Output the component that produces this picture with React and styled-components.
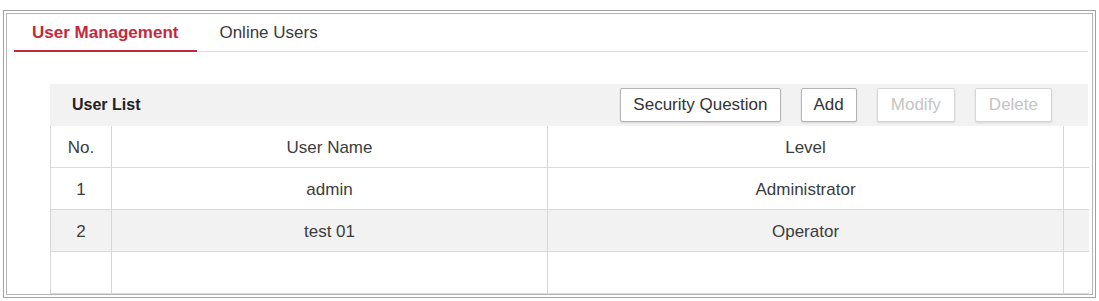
import React from "react";
import styled, { createGlobalStyle } from "styled-components";

const Global = createGlobalStyle`
  html, body { margin: 0; padding: 0; background: #fff; }
  body { font-family: "Liberation Sans", Arial, sans-serif; color: #333; }
`;

const Page = styled.div`
  padding: 10px 3px 0 3px;
  width: 1099px;
  height: 301px;
  box-sizing: border-box;
`;

const FrameOuter = styled.div`
  height: 288px;
  box-sizing: border-box;
  border: 1px solid #a2a2a2;
  padding: 2px;
  background: #fff;
`;

const Frame = styled.div`
  height: 100%;
  box-sizing: border-box;
  border: 1px solid #b4b4b4;
  background: #fff;
  overflow: hidden;
  display: flex;
  flex-direction: column;
`;

const TabBar = styled.div`
  display: flex;
  align-items: flex-end;
  margin: 0 4px 0 7px;
  height: 39px;
  border-bottom: 1px solid #dcdcdc;
`;

const Tab = styled.div`
  height: 100%;
  box-sizing: border-box;
  display: flex;
  align-items: center;
  padding: ${(p) => (p.$active ? "1px 19px 0 18px" : "1px 18px 0 22px")};
  font-size: 17px;
  font-weight: ${(p) => (p.$active ? 700 : 400)};
  color: ${(p) => (p.$active ? "#c5283b" : "#3a3a3a")};
  border-bottom: ${(p) => (p.$active ? "2px solid #c5283b" : "2px solid transparent")};
  margin-bottom: -1px;
`;

const Panel = styled.div`
  margin: 32px 4px 0 43px;
  display: flex;
  flex-direction: column;
`;

const PanelHeader = styled.div`
  height: 42px;
  background: #f2f2f2;
  display: flex;
  align-items: center;
  padding: 0 36px 0 22px;
`;

const Title = styled.div`
  font-size: 16px;
  font-weight: 700;
  color: #222;
  flex: 1;
`;

const Buttons = styled.div`
  display: flex;
  gap: 20px;
`;

const Button = styled.button`
  height: 34px;
  box-sizing: border-box;
  padding: 0 ${(p) => (p.$disabled ? "13px" : "12px")};
  font-family: "Liberation Sans", Arial, sans-serif;
  font-size: 17px;
  background: #fff;
  color: ${(p) => (p.$disabled ? "#c4c4c4" : "#333")};
  border: 1px solid ${(p) => (p.$disabled ? "#d6d6d6" : "#b4b4b4")};
  border-radius: 2px;
  box-shadow: 0 1px 2px rgba(0, 0, 0, 0.12);
  cursor: default;
`;

const Table = styled.div`
  display: grid;
  grid-template-columns: 61px 436px 516px 25px;
  border-left: 1px solid #d6d6d6;
  border-right: 1px solid #d6d6d6;
`;

const Cell = styled.div`
  height: 42px;
  box-sizing: border-box;
  padding-top: 2px;
  border-bottom: 1px solid #dadada;
  border-right: ${(p) => (p.$last ? "none" : "1px solid #d6d6d6")};
  background: ${(p) => (p.$alt ? "#f2f2f2" : "#fff")};
  display: flex;
  align-items: center;
  justify-content: center;
  font-size: 17px;
  color: #3c3c3c;
`;

const rows = [
  ["No.", "User Name", "Level"],
  ["1", "admin", "Administrator"],
  ["2", "test 01", "Operator"],
  ["", "", ""],
];

export default function App() {
  return (
    <>
      <Global />
      <Page>
        <FrameOuter>
          <Frame>
            <TabBar>
              <Tab $active>User Management</Tab>
              <Tab>Online Users</Tab>
            </TabBar>
            <Panel>
              <PanelHeader>
                <Title>User List</Title>
                <Buttons>
                  <Button>Security Question</Button>
                  <Button>Add</Button>
                  <Button $disabled>Modify</Button>
                  <Button $disabled>Delete</Button>
                </Buttons>
              </PanelHeader>
              <Table>
                {rows.map((r, i) => (
                  <React.Fragment key={i}>
                    {r.map((c, j) => (
                      <Cell key={j} $alt={i === 2}>
                        {c}
                      </Cell>
                    ))}
                    <Cell $alt={i === 2} $last />
                  </React.Fragment>
                ))}
              </Table>
            </Panel>
          </Frame>
        </FrameOuter>
      </Page>
    </>
  );
}
